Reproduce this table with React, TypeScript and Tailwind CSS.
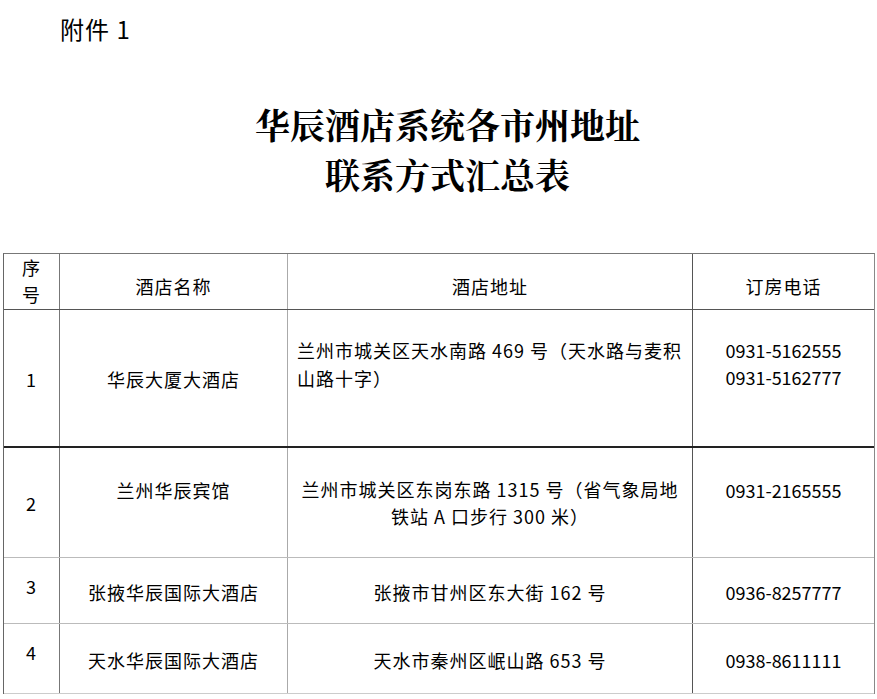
import React from "react";

const body = "font-['Noto_Sans_CJK_SC','Noto_Sans',sans-serif]";

export default function App() {
  return (
    <div className={`w-[877px] h-[699px] bg-white overflow-hidden text-black ${body}`}>
      <div className="pl-[60px] pt-[13px] text-[24px] leading-[32px] tracking-[1px]">附件 1</div>
      <div className="mt-[54px] pl-[18px] text-center text-[35px] leading-[50px] font-bold font-['Noto_Serif_CJK_SC','Noto_Sans_CJK_SC',serif]">
        <div>华辰酒店系统各市州地址</div>
        <div>联系方式汇总表</div>
      </div>
      <div className="mt-[54px] ml-[3px] w-[872px] border-l border-t border-r border-l-[#666] border-r-[#888] border-t-[#777] text-[18px] leading-[28px] tracking-[1px]">
        {/* header */}
        <div className="flex h-[56px] border-b border-b-[#555]">
          <div className="w-[56px] shrink-0 border-r border-r-[#777] text-center pt-0 leading-[27px]">序<br />号</div>
          <div className="w-[228px] shrink-0 border-r border-r-[#aaa] text-center pt-[18px]">酒店名称</div>
          <div className="w-[405px] shrink-0 border-r border-r-[#555] text-center pt-[18px]">酒店地址</div>
          <div className="flex-1 text-center pt-[18px]">订房电话</div>
        </div>
        {/* row 1 */}
        <div className="flex h-[138px] border-b-2 border-b-[#222]">
          <div className="w-[56px] shrink-0 border-r border-r-[#777] text-center pt-[55px]">1</div>
          <div className="w-[228px] shrink-0 border-r border-r-[#aaa] text-center pt-[55px]">华辰大厦大酒店</div>
          <div className="w-[405px] shrink-0 border-r border-r-[#555] text-left pl-[9px] pt-[26px]">
            兰州市城关区天水南路 469 号（天水路与麦积<br />山路十字）
          </div>
          <div className="flex-1 text-center pt-[27px] leading-[27px] tracking-normal">
            0931-5162555<br />0931-5162777
          </div>
        </div>
        {/* row 2 */}
        <div className="flex h-[110px] border-b border-b-[#bbb]">
          <div className="w-[56px] shrink-0 border-r border-r-[#777] text-center pt-[41px]">2</div>
          <div className="w-[228px] shrink-0 border-r border-r-[#aaa] text-center pt-[28px]">兰州华辰宾馆</div>
          <div className="w-[405px] shrink-0 border-r border-r-[#555] text-center pt-[28px] leading-[27px]">
            兰州市城关区东岗东路 1315 号（省气象局地<br />铁站 A 口步行 300 米）
          </div>
          <div className="flex-1 text-center pt-[28px] tracking-normal">0931-2165555</div>
        </div>
        {/* row 3 */}
        <div className="flex h-[66px] border-b border-b-[#bbb]">
          <div className="w-[56px] shrink-0 border-r border-r-[#777] text-center pt-[14px]">3</div>
          <div className="w-[228px] shrink-0 border-r border-r-[#aaa] text-center pt-[20px]">张掖华辰国际大酒店</div>
          <div className="w-[405px] shrink-0 border-r border-r-[#555] text-center pt-[20px]">张掖市甘州区东大街 162 号</div>
          <div className="flex-1 text-center pt-[20px] tracking-normal">0936-8257777</div>
        </div>
        {/* row 4 */}
        <div className="flex h-[70px] border-b border-b-[#ccc]">
          <div className="w-[56px] shrink-0 border-r border-r-[#777] text-center pt-[14px]">4</div>
          <div className="w-[228px] shrink-0 border-r border-r-[#aaa] text-center pt-[22px]">天水华辰国际大酒店</div>
          <div className="w-[405px] shrink-0 border-r border-r-[#555] text-center pt-[22px]">天水市秦州区岷山路 653 号</div>
          <div className="flex-1 text-center pt-[22px] tracking-normal">0938-8611111</div>
        </div>
      </div>
    </div>
  );
}
